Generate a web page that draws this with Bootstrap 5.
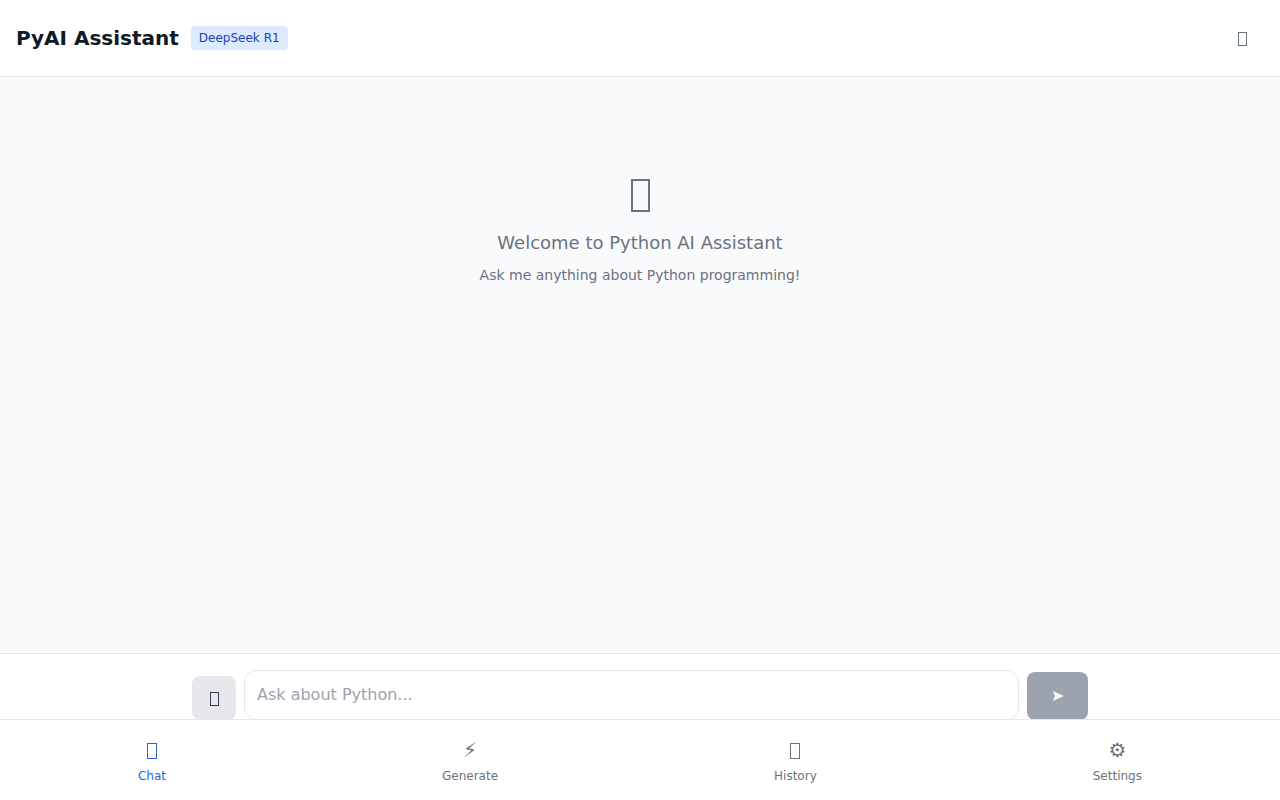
<!DOCTYPE html>
<html lang="en">
<head>
<meta charset="utf-8">
<title>PyAI Assistant</title>
<link href="https://cdn.jsdelivr.net/npm/bootstrap@5.3.0/dist/css/bootstrap.min.css" rel="stylesheet">
<style>
html,body{height:100%}
body{font-family:"DejaVu Sans",sans-serif;background:#f9fafb;padding-bottom:64px;color:#111827;-webkit-font-smoothing:antialiased}
.app-shell{height:100%}
.top-bar{background:#fff;border-bottom:1px solid #e5e7eb;padding:16px;height:77px}
.app-title{font-size:20px;font-weight:700;color:#111827;margin:0;line-height:28px}
.model-tag{background:#dbeafe;color:#1e40af;font-size:12px;line-height:16px;padding:4px 8px;border-radius:4px}
.icon-btn{background:none;border:0;padding:1px 0 0;color:#6b7280;width:44px;height:44px}
.welcome{padding-top:88px;color:#6b7280;text-align:center}
.welcome-icon{height:48px;margin-bottom:16px;padding-top:14px}
.welcome-title{font-size:18px;line-height:28px;font-weight:400;margin:0 0 8px}
.welcome-sub{font-size:14px;line-height:20px;margin:0}
.composer{background:#fff;border-top:1px solid #e5e7eb;padding:16px}
.composer-row{max-width:896px;margin:0 auto}
.attach-btn{width:44px;height:44px;background:#e5e7eb;border:0;border-radius:8px;color:#374151;padding:0;flex:none}
.ask-input{flex:1 1 0;min-width:0;height:50px;border:1px solid #e5e7eb;border-radius:12px;padding:11px 12px 13px;font-size:16px;line-height:24px;font-family:inherit;color:#111827;background:#fff;outline:0}
.ask-input::placeholder{color:#9ca3af;opacity:1}
.send-btn{width:61px;height:48px;background:#9ca3af;color:#fff;border:0;border-radius:8px;font-size:16px;padding:0;flex:none}
.bottom-nav{position:fixed;left:0;right:0;bottom:0;height:81px;background:#fff;border-top:1px solid #e5e7eb;z-index:10;padding-top:16px}
.nav-item-tab{background:none;border:0;padding:0 16px;color:#6b7280;font-size:12px;line-height:16px;text-align:center}
.nav-item-tab.is-on{color:#2563eb}
.tab-glyph{display:flex;align-items:center;justify-content:center;height:28px;font-size:20px;line-height:28px;margin-bottom:4px}
.tofu{display:inline-block;box-sizing:border-box;border:1px solid currentColor;vertical-align:middle}
.tofu-s{width:9px;height:14px}
.tofu-n{width:10px;height:16px;margin-top:2px}
.tofu-l{display:block;width:19px;height:33px;border-width:2px;margin:0 auto}
</style>
</head>
<body>
<div class="app-shell d-flex flex-column">
  <header class="top-bar d-flex align-items-center justify-content-between">
    <div class="d-flex align-items-center gap-2">
      <h1 class="app-title me-1">PyAI Assistant</h1>
      <span class="model-tag">DeepSeek R1</span>
    </div>
    <button class="icon-btn" type="button" aria-label="Theme"><span class="tofu tofu-s"></span></button>
  </header>
  <main class="welcome flex-grow-1">
    <div class="welcome-icon"><span class="tofu tofu-l"></span></div>
    <h2 class="welcome-title">Welcome to Python AI Assistant</h2>
    <p class="welcome-sub">Ask me anything about Python programming!</p>
  </main>
  <div class="composer">
    <div class="composer-row d-flex align-items-end gap-2">
      <button class="attach-btn" type="button" aria-label="Attach"><span class="tofu tofu-s"></span></button>
      <input class="ask-input" type="text" placeholder="Ask about Python...">
      <button class="send-btn" type="button">➤</button>
    </div>
  </div>
</div>
<nav class="bottom-nav d-flex justify-content-around align-items-start">
  <button class="nav-item-tab is-on" type="button"><span class="tab-glyph"><span class="tofu tofu-n"></span></span>Chat</button>
  <button class="nav-item-tab" type="button"><span class="tab-glyph">⚡</span>Generate</button>
  <button class="nav-item-tab" type="button"><span class="tab-glyph"><span class="tofu tofu-n"></span></span>History</button>
  <button class="nav-item-tab" type="button"><span class="tab-glyph">⚙</span>Settings</button>
</nav>
<script src="https://cdn.jsdelivr.net/npm/bootstrap@5.3.0/dist/js/bootstrap.bundle.min.js"></script>
</body>
</html>
